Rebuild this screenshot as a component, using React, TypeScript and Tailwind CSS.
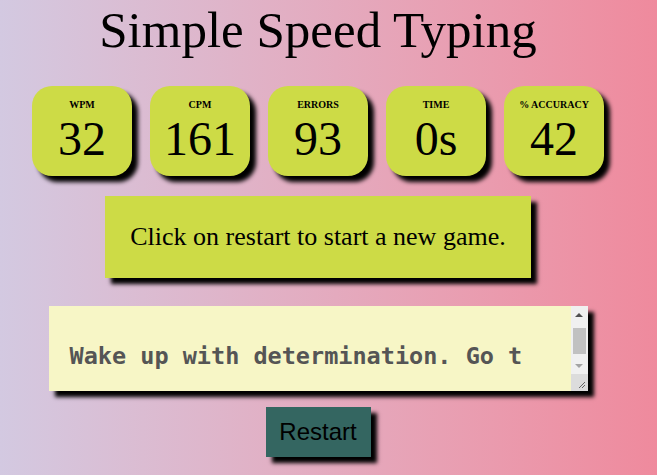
import React from 'react';

const stats = [
  { label: 'WPM', value: '32' },
  { label: 'CPM', value: '161' },
  { label: 'Errors', value: '93' },
  { label: 'Time', value: '0s' },
  { label: '% Accuracy', value: '42' },
];

export default function App() {
  return (
    <div className="min-h-[475px] w-full bg-gradient-to-r from-[#d3c9e1] to-[#ef8a9d] font-['Liberation_Serif',serif] text-black">
      <div className="flex w-[636px] flex-col items-center">
        {/* header */}
        <h1 className="mt-[1px] text-[51px] leading-[58px] font-normal">Simple Speed Typing</h1>

        {/* stat cards */}
        <div className="mt-[27px] flex gap-[18px]">
          {stats.map((s) => (
            <div
              key={s.label}
              className="flex h-[90px] w-[100px] flex-col items-center rounded-[20px] bg-[#cddb46] pt-[13px] shadow-[6px_6px_4px_#000]"
            >
              <div className="text-[10px] font-bold uppercase leading-[12px]">{s.label}</div>
              <div className="text-[48px] leading-[55px]">{s.value}</div>
            </div>
          ))}
        </div>

        {/* message */}
        <div className="mt-[20px] w-[426px] bg-[#cddb46] py-[26px] text-center text-[26px] leading-[30px] shadow-[6px_6px_4px_#000]">
          Click on restart to start a new game.
        </div>

        {/* input */}
        <div className="relative mt-[28px] h-[85px] w-[539px] shadow-[6px_6px_4px_#000]">
          <textarea
            readOnly
            value={'Wake up with determination. Go t\n\n\n'}
            className="block h-full w-full resize-none overflow-hidden bg-[#f7f6c6] pt-[36px] pl-[21px] pr-[20px] font-['DejaVu_Sans_Mono',monospace] text-[23.5px] font-bold leading-[28px] text-[#555] outline-none"
          />
          {/* scrollbar */}
          <div className="absolute top-0 right-0 flex h-full w-[17px] flex-col bg-[#f0f0f0]">
            <div className="flex h-[17px] items-center justify-center">
              <div className="h-0 w-0 border-x-[4px] border-b-[4px] border-x-transparent border-b-[#505050]" />
            </div>
            <div className="flex flex-1 flex-col px-[2px] pt-[5px]">
              <div className="h-[26px] w-full bg-[#c1c1c1]" />
            </div>
            <div className="flex h-[17px] items-center justify-center">
              <div className="h-0 w-0 border-x-[4px] border-t-[4px] border-x-transparent border-t-[#a3a3a3]" />
            </div>
            <div className="relative h-[17px] bg-[#dcdcdc]">
              <svg width="17" height="17" viewBox="0 0 17 17" className="absolute inset-0">
                <path d="M14 8 L8 14 M14 11 L11 14" stroke="#666" strokeWidth="1" />
              </svg>
            </div>
          </div>
        </div>

        {/* restart */}
        <button className="mt-[16px] h-[50px] w-[105px] bg-[#346661] font-['Liberation_Sans',sans-serif] text-[24px] leading-[28px] text-black shadow-[6px_6px_4px_#000]">
          Restart
        </button>
      </div>
    </div>
  );
}
